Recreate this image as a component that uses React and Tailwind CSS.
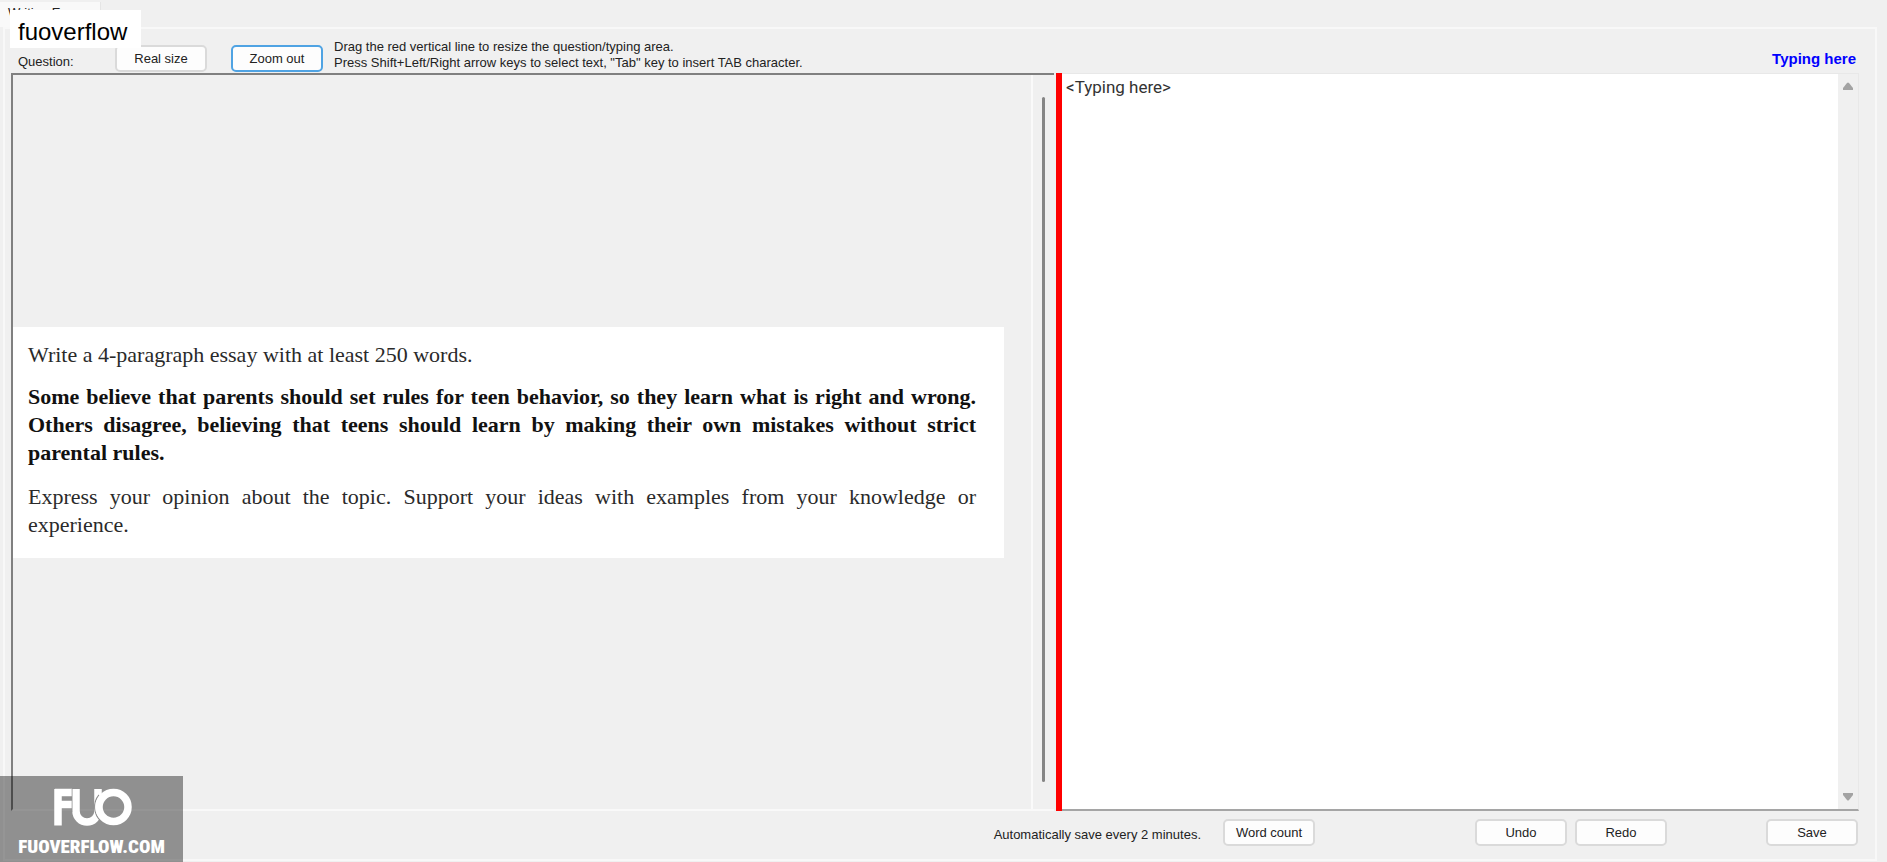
import { useState } from 'react'

const ToolButton = ({ children, active, className = '', ...rest }) => (
  <button
    type="button"
    className={`h-[27px] w-[92px] shrink-0 rounded-[5px] border-2 bg-[#fdfdfd] text-center leading-4 ${
      active ? 'border-[#4fa3e3]' : 'border-[#dadada]'
    } ${className}`}
    {...rest}
  >
    {children}
  </button>
)

// FUO monogram, the ring of the O runs over the right arm of the U
const Monogram = () => (
  <svg viewBox="0 0 80 40" className="h-10 w-20" fill="none" aria-hidden="true">
    <g stroke="#fff" strokeWidth="7.5">
      <path d="M6 38.500V2" />
      <path d="M3 5.500H20" />
      <path d="M7 17.500H20" />
      <path d="M24 2V24a11 11 0 0 0 22 0V2" />
    </g>
    <path d="M20 2V25" stroke="#8f8f8f" strokeWidth="0.6" />
    <path d="M47 8A18.700 18.700 0 0 0 49 34" stroke="#8f8f8f" strokeWidth="1.2" />
    <circle cx="61.500" cy="20" r="14.500" stroke="#fff" strokeWidth="7.5" />
  </svg>
)

export default function App() {
  const [answer, setAnswer] = useState('<Typing here>')

  return (
    <div className="relative flex min-h-screen flex-col bg-[#f0f0f0] pr-[10px] pb-px font-['Liberation_Sans',Arial,sans-serif] text-[13px] leading-4 text-[#222]">
      {/* Tab strip */}
      <div className="flex h-[27px] shrink-0 items-end">
        <div className="h-[25px] w-[101px] overflow-hidden border-r border-[#e5e5e5] bg-[#f9f9f9] pt-[3px] pl-2">Writing Exam</div>
      </div>

      <div className="ml-[3px] flex flex-1 flex-col border-2 border-[#f8f8f8] pr-4 pl-1.5">
        {/* Toolbar */}
        <header className="flex h-11 shrink-0 items-start">
          <span className="w-[104px] pt-[25px] pl-[7px]">Question:</span>
          <ToolButton className="mt-4">Real size</ToolButton>
          <ToolButton className="mt-4 ml-6" active>Zoom out</ToolButton>
          <p className="ml-[11px] flex-1 pt-2.5">
            Drag the red vertical line to resize the question/typing area.
            <br />
            Press Shift+Left/Right arrow keys to select text, "Tab" key to insert TAB character.
          </p>
          <label htmlFor="answer" className="pt-[22px] pr-[3px] text-[15px] font-bold text-[#0000ff]">Typing here</label>
        </header>

        {/* Question and typing area */}
        <main className="flex flex-1">
          <section className="mr-0.5 flex w-[1043px] shrink-0 border-t-2 border-b-2 border-l-2 border-t-[#808080] border-b-[#f9f9f9] border-l-[#808080]">
            <div className="flex flex-1 items-center border-r-2 border-[#fafafa]">
              <article className="mr-[27px] flex-1 bg-white pt-3.5 pr-7 pb-[19px] pl-[15px] text-justify font-['Liberation_Serif','Times_New_Roman',serif] text-[22px] leading-7 text-[#2a2a2a]">
                <p>Write a 4-paragraph essay with at least 250 words.</p>
                <p className="mt-3.5 font-bold text-[#111]">
                  Some believe that parents should set rules for teen behavior, so they learn what is right and wrong.
                  Others disagree, believing that teens should learn by making their own mistakes without strict
                  parental rules.
                </p>
                <p className="mt-4">
                  Express your opinion about the topic. Support your ideas with examples from your knowledge or
                  experience.
                </p>
              </article>
            </div>
            <div className="flex w-[21px] justify-center pt-[22px] pb-[27px]">
              <div className="w-[3px] rounded bg-[#858585]" />
            </div>
          </section>
          <div className="w-1.5 shrink-0 cursor-col-resize bg-[#ff0000]" />
          <section className="flex flex-1 border-t border-r border-b-2 border-t-[#e8e8e8] border-r-[#e8e8e8] border-b-[#a5a5a5] bg-white">
            <textarea
              id="answer"
              value={answer}
              onChange={(e) => setAnswer(e.target.value)}
              className="flex-1 resize-none bg-white pt-[3px] pl-1 font-[Roboto,sans-serif] text-[17px] leading-5 text-[#333] outline-none"
            />
            <div className="flex w-5 flex-col items-center justify-between bg-[#f0f0f0] py-2 text-[#a3a3a3]">
              <svg viewBox="0 0 10 8" className="h-2 w-2.5" fill="currentColor"><path d="M4 1Q5 0 6 1L10 6V8H0V6Z" /></svg>
              <svg viewBox="0 0 10 8" className="h-2 w-2.5" fill="currentColor"><path d="M4 7Q5 8 6 7L10 2V0H0V2Z" /></svg>
            </div>
          </section>
        </main>

        {/* Bottom actions */}
        <footer className="flex h-12 shrink-0 items-start justify-end pt-2 pr-px">
          <span className="pt-2">Automatically save every 2 minutes.</span>
          <ToolButton className="ml-[22px]">Word count</ToolButton>
          <ToolButton className="ml-[160px]">Undo</ToolButton>
          <ToolButton className="ml-2">Redo</ToolButton>
          <ToolButton className="ml-[99px]">Save</ToolButton>
        </footer>
      </div>

      {/* Site marks over the window */}
      <div className="absolute top-2.5 left-2.5 h-[38px] bg-white pt-[7px] pr-3.5 pl-2 font-['Liberation_Sans',Arial,sans-serif] text-2xl leading-[30px] text-black">fuoverflow</div>
      <div className="absolute bottom-0 left-0 flex h-[86px] w-[183px] flex-col items-center bg-black/40 pt-[11px] text-white">
        <Monogram />
        <div className="mt-2 font-['Roboto_Condensed',Roboto,sans-serif] text-[19px] leading-6 font-black">FUOVERFLOW.COM</div>
      </div>
    </div>
  )
}
